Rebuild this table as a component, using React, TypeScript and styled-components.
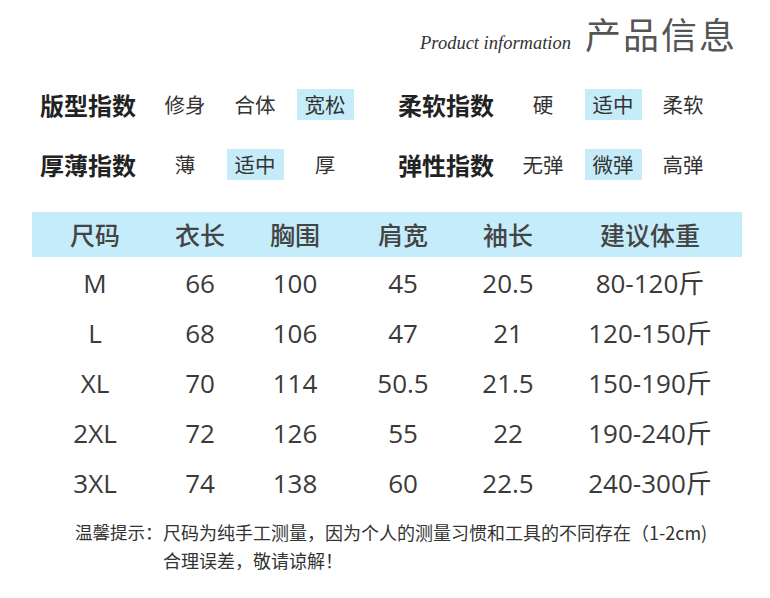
import React from "react";
import styled, { createGlobalStyle } from "styled-components";

const Global = createGlobalStyle`
  html, body { margin: 0; padding: 0; background: #fff; }
  body { font-family: "Open Sans", "Noto Sans CJK SC", sans-serif; }
  * { box-sizing: border-box; }
`;

const Page = styled.div`
  width: 770px;
  height: 598px;
  background: #fff;
  overflow: hidden;
`;

const TitleBar = styled.div`
  display: flex;
  justify-content: flex-end;
  align-items: baseline;
  gap: 14px;
  padding: 12px 33px 0 0;
`;

const EnTitle = styled.span`
  font-family: "Liberation Serif", "DejaVu Serif", serif;
  font-style: italic;
  font-size: 18.5px;
  color: #333;
`;

const CnTitle = styled.span`
  font-family: "Noto Sans CJK SC", sans-serif;
  font-size: 36px;
  line-height: 42px;
  color: #555;
  letter-spacing: 2px;
`;

const Indices = styled.div`
  display: grid;
  grid-template-columns: 358px 360px;
  row-gap: 28px;
  padding: 34px 0 0 40px;
`;

const IndexRow = styled.div`
  display: flex;
  align-items: center;
  height: 32px;
`;

const IndexLabel = styled.span`
  font-family: "Noto Sans CJK SC", sans-serif;
  font-weight: 700;
  font-size: 24px;
  color: #222;
  width: 96px;
  margin-right: 14px;
  white-space: nowrap;
`;

const Option = styled.span<{ $on?: boolean }>`
  width: 70px;
  display: flex;
  justify-content: center;
  font-family: "Noto Sans CJK SC", sans-serif;
  font-size: 20.5px;
  color: #333;
  & > span {
    display: inline-block;
    padding: 0 8px;
    height: 31px;
    line-height: 31px;
    background: ${(p) => (p.$on ? "#c6ecfa" : "transparent")};
  }
`;

const Table = styled.div`
  margin: 32px 0 0 32px;
  width: 710px;
`;

const Row = styled.div<{ $head?: boolean }>`
  display: grid;
  grid-template-columns: 126px 84px 106px 110px 100px 184px;
  align-items: center;
  height: ${(p) => (p.$head ? "45px" : "50px")};
  background: ${(p) => (p.$head ? "#c5ecfb" : "transparent")};
`;

const Cell = styled.div<{ $head?: boolean }>`
  text-align: center;
  font-family: "Open Sans", "Noto Sans CJK SC", sans-serif;
  font-size: ${(p) => (p.$head ? "25px" : "26px")};
  font-weight: ${(p) => (p.$head ? 500 : 400)};
  line-height: 1.2;
  padding-top: ${(p) => (p.$head ? "0" : "4px")};
  color: ${(p) => (p.$head ? "#444" : "#3a3a3a")};
  white-space: nowrap;
`;

const Note = styled.div`
  display: flex;
  margin: 11px 0 0 75px;
  font-family: "Noto Sans CJK SC", sans-serif;
  font-size: 18px;
  line-height: 28px;
  color: #333;
`;

const NoteLabel = styled.span`
  width: 88px;
  font-size: 17.5px;
  white-space: nowrap;
`;

const NoteBody = styled.div`
  display: flex;
  flex-direction: column;
  white-space: nowrap;
`;

const groups: { label: string; opts: string[]; on: number }[] = [
  { label: "版型指数", opts: ["修身", "合体", "宽松"], on: 2 },
  { label: "柔软指数", opts: ["硬", "适中", "柔软"], on: 1 },
  { label: "厚薄指数", opts: ["薄", "适中", "厚"], on: 1 },
  { label: "弹性指数", opts: ["无弹", "微弹", "高弹"], on: 1 },
];

const head = ["尺码", "衣长", "胸围", "肩宽", "袖长", "建议体重"];
const rows = [
  ["M", "66", "100", "45", "20.5", "80-120斤"],
  ["L", "68", "106", "47", "21", "120-150斤"],
  ["XL", "70", "114", "50.5", "21.5", "150-190斤"],
  ["2XL", "72", "126", "55", "22", "190-240斤"],
  ["3XL", "74", "138", "60", "22.5", "240-300斤"],
];

export default function App() {
  return (
    <Page>
      <Global />
      <TitleBar>
        <EnTitle>Product information</EnTitle>
        <CnTitle>产品信息</CnTitle>
      </TitleBar>
      <Indices>
        {groups.map((g) => (
          <IndexRow key={g.label}>
            <IndexLabel>{g.label}</IndexLabel>
            {g.opts.map((o, i) => (
              <Option key={o + i} $on={i === g.on}>
                <span>{o}</span>
              </Option>
            ))}
          </IndexRow>
        ))}
      </Indices>
      <Table>
        <Row $head>
          {head.map((h) => (
            <Cell $head key={h}>
              {h}
            </Cell>
          ))}
        </Row>
        {rows.map((r) => (
          <Row key={r[0]}>
            {r.map((c, i) => (
              <Cell key={i}>{c}</Cell>
            ))}
          </Row>
        ))}
      </Table>
      <Note>
        <NoteLabel>温馨提示：</NoteLabel>
        <NoteBody>
          <span>尺码为纯手工测量，因为个人的测量习惯和工具的不同存在（1-2cm)</span>
          <span>合理误差，敬请谅解！</span>
        </NoteBody>
      </Note>
    </Page>
  );
}
